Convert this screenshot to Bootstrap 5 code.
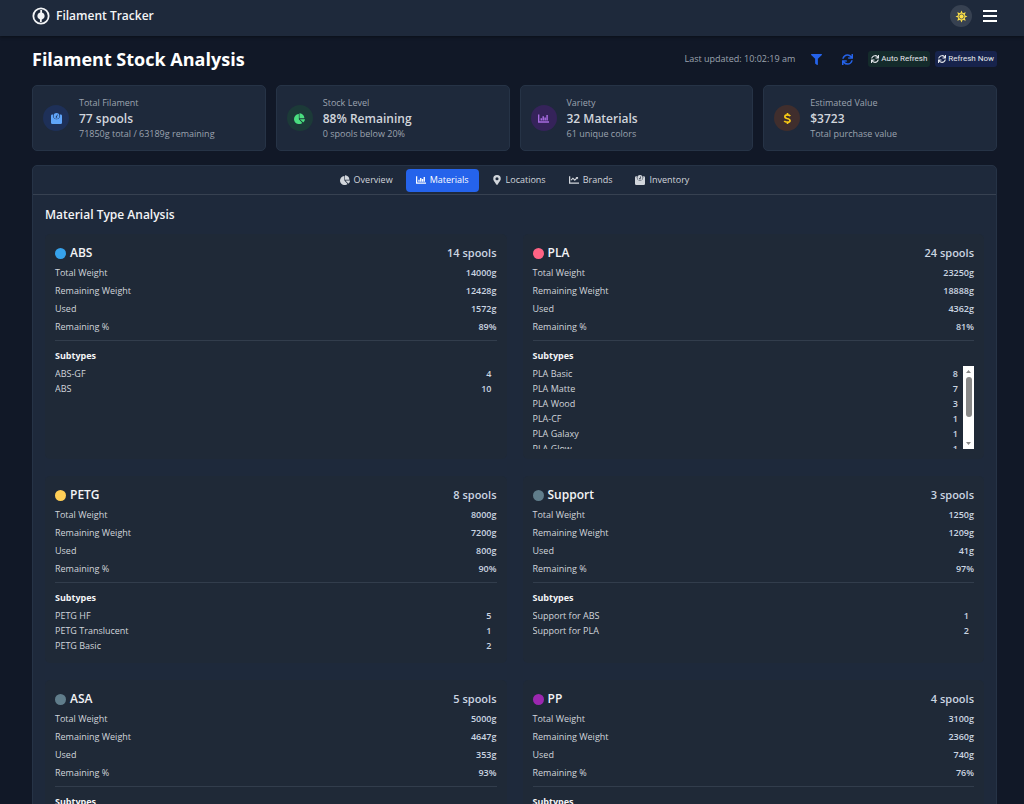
<!DOCTYPE html>
<html lang="en"><head><meta charset="utf-8"><title>Filament Tracker</title>
<meta name="viewport" content="width=device-width, initial-scale=1">
<link href="https://cdn.jsdelivr.net/npm/bootstrap@5.3.0/dist/css/bootstrap.min.css" rel="stylesheet">
<style>
html,body{height:100%;overflow:hidden}
body{background:#111827;color:#d1d5db;font:9px/14px "Open Sans","Noto Sans",sans-serif}
button{font:inherit;border:0;background:none;color:inherit}
svg{display:block;fill:currentColor;flex:none}
.gutter{padding-left:32px;padding-right:27px}
.topbar{background:#1e293b;height:36px;padding-bottom:4px;color:#fff;box-shadow:0 1px 3px #0006}
.brand-link{font-size:12px;font-weight:600;color:#f3f4f6;gap:6px}
.actions{gap:11px}
.theme-btn{width:22px;height:22px;background:#374151;color:#fde047}
.heading{height:46px;margin-bottom:3px}
h1{font-size:18px;line-height:28px;font-weight:700;color:#fff}
h2{font-size:12px;line-height:18px;font-weight:600;color:#f3f4f6;margin:11px 12px 10px}
h3{font-size:12px;line-height:18px;font-weight:600;color:#f3f4f6;gap:4px}
.muted-text{color:#9ca3af}
.toolbar-set{gap:20px}
.icon-btn{color:#2563eb}
.pills{gap:5px;margin-left:15px}
.pill{height:16px;font-family:Roboto,"Open Sans",sans-serif;font-size:8px;line-height:16px;padding:0 3px;gap:2px;color:#e5e7eb;border-radius:3px}
.pill-green{background:#142b2b}.pill-blue{background:#17234c}
.tiles{display:grid;grid-template-columns:repeat(4,1fr);gap:10px}
.tile{height:66px;background:#1e293b;border:1px solid #263346;border-radius:5px;padding:0 10px;gap:10px}
.disc{width:26px;height:26px}
.tile-value{font-size:12px;line-height:17px;font-weight:600;color:#d1d5db}
.panel{background:#1e293b;border:1px solid #263346;border-radius:5px 5px 0 0;margin-top:14px}
.tabs{height:29px;gap:3px;border-bottom:1px solid #374151}
.tab{height:23px;padding:0 10px;gap:4px;border-radius:4px;font-weight:500;color:#d1d5db}
.tab.active{background:#2563eb;color:#fff}
.materials{display:grid;grid-template-columns:1fr 1fr;gap:17px 16px;padding:0 12px}
.material{background:#1f2937;border-radius:5px;padding:10px}
.count{font-size:11px;line-height:18px;font-weight:600;color:#cbd5e1}
.dot{width:11px;height:11px}
.stats{margin:2px 0 4px}
.stats>div{line-height:18px}
.stats dt{font-weight:400}
.stats dd,.sublist span{font-weight:600;color:#cbd5e1;margin:0}
.subs{border-top:1px solid #323d4c;padding-top:8px}
h4{font-size:9px;line-height:14px;font-weight:700;color:#f3f4f6;margin-bottom:3px}
.subwrap{max-height:83px;overflow:hidden}
.sublist{line-height:15px;margin:0}
.sublist li{padding-right:5px}
.scroller{width:11px;height:83px;background:#fff;color:#888;padding:4px 0}
.thumb{width:6px;height:40px;margin-bottom:auto;margin-top:4px;border-radius:3px;background:#888}
</style></head><body>
<svg class="d-none">
<symbol id="logo" viewBox="0 0 24 24"><circle cx="12" cy="12" r="10.200" fill="none" stroke="currentColor" stroke-width="2.400"/><path d="M11 4h2.400v3.300a4.900 4.900 0 0 1 0 9.400H13V20h-2.400v-3.300a4.900 4.900 0 0 1 0-9.400H11z"/></symbol>
<symbol id="sun" viewBox="0 0 24 24"><path d="m12 1 2.400 5.200L19.800 4.200l-2 5.400L23 12l-5.200 2.400 2 5.400-5.400-2L12 23l-2.400-5.200-5.400 2 2-5.400L1 12l5.200-2.400-2-5.400 5.400 2z"/><circle cx="12" cy="12" r="4.500" fill="none" stroke="#374151" stroke-width="1.300"/></symbol>
<symbol id="filter" viewBox="0 0 512 512"><path d="M488 0H24C3 0-8 26 7 41l185 185v206c0 8 4 15 10 20l80 56c16 11 38 0 38-20V226L505 41c15-15 4-41-17-41z"/></symbol>
<symbol id="sync" viewBox="0 0 512 512"><path d="M440.650 12.570l4 82.770A247.160 247.160 0 0 0 255.830 8C134.730 8 33.910 94.920 12.290 209.820A12 12 0 0 0 24.090 224h49.050a12 12 0 0 0 11.670-9.260 175.910 175.910 0 0 1 317-56.940l-101.460-4.860a12 12 0 0 0-12.570 12v47.410a12 12 0 0 0 12 12H500a12 12 0 0 0 12-12V12a12 12 0 0 0-12-12h-47.370a12 12 0 0 0-11.980 12.570zM255.830 432a175.610 175.610 0 0 1-146-77.800l101.800 4.870a12 12 0 0 0 12.570-12v-47.400a12 12 0 0 0-12-12H12a12 12 0 0 0-12 12V500a12 12 0 0 0 12 12h47.350a12 12 0 0 0 12-12.600l-4.150-82.570A247.170 247.170 0 0 0 255.830 504c121.110 0 221.930-86.920 243.550-201.820a12 12 0 0 0-11.800-14.180h-49.050a12 12 0 0 0-11.670 9.260A175.860 175.860 0 0 1 255.830 432z"/></symbol>
<symbol id="pie" viewBox="0 0 544 512"><path d="M528 288H290l158 158c6 6 16 7 22 1 39-36 65-87 73-143 1-9-6-16-15-16zM512 223C504 101 407 8 289 0c-9-1-17 7-17 16v224h224c9 0 17-8 16-17zM240 288V50c0-9-7-16-16-15C96 53 0 162 0 292c4 135 119 242 254 240 53-1 102-18 142-46 8-6 9-18 2-25L240 288z"/></symbol>
<symbol id="bars" viewBox="0 0 512 512"><path d="M0 64h64v320h448v64H0zM118 240h70v105h-70zM208 150h70v195h-70zM298 210h70v135h-70zM388 96h70v249h-70z"/></symbol>
<symbol id="line" viewBox="0 0 512 512"><path d="M0 64h64v320h448v64H0zM330 96h134v134l-46-46-122 122-96-96-72 72-42-42 114-114 96 96 78-78z"/></symbol>
<symbol id="pin" viewBox="0 0 384 512"><path fill-rule="evenodd" d="M172 502C27 291 0 270 0 192a192 192 0 0 1 384 0c0 78-27 99-172 310a24 24 0 0 1-40 0zM192 272a80 80 0 1 0 0-160 80 80 0 0 0 0 160z"/></symbol>
<symbol id="scale" viewBox="0 0 512 512"><path fill-rule="evenodd" d="M64 64h36a168 168 0 1 0 312 0h36a64 64 0 0 1 64 64v320a64 64 0 0 1-64 64H64a64 64 0 0 1-64-64V128a64 64 0 0 1 64-64z"/><path fill-rule="evenodd" d="M256 0a136 136 0 1 0 0 272 136 136 0 0 0 0-272zm0 226a40 40 0 0 1-28-68 40 40 0 0 1 20-10l38-84 30 14-38 84a40 40 0 0 1-22 64z"/></symbol>
<symbol id="dollar" viewBox="0 0 24 24"><path fill="none" stroke="currentColor" stroke-width="3.600" d="M18 7c-1-2-3-3-6-3-7 0-8 6-1 8 9 2 8 8 1 8-3 0-6-1-7-3M12 0v4m0 16v4"/></symbol>
</svg>
<header class="topbar gutter d-flex align-items-center justify-content-between">
<a href="#" class="brand-link d-flex align-items-center text-decoration-none"><svg width="18" height="18"><use href="#logo"/></svg>Filament Tracker</a>
<div class="actions d-flex align-items-center"><button class="theme-btn rounded-circle d-flex align-items-center justify-content-center p-0" aria-label="Toggle theme"><svg width="13" height="13"><use href="#sun"/></svg></button>
<button class="p-0" aria-label="Menu"><svg width="14" height="14" viewBox="0 0 14 14"><path d="M0 1h14v2H0zM0 6h14v2H0zM0 11h14v2H0z"/></svg></button></div>
</header>
<main class="gutter">
<div class="heading d-flex align-items-center justify-content-between"><h1 class="m-0">Filament Stock Analysis</h1>
<div class="d-flex align-items-center"><span class="muted-text me-3">Last updated: 10:02:19 am</span>
<div class="toolbar-set d-flex"><button class="icon-btn p-0" aria-label="Filter"><svg width="11" height="11"><use href="#filter"/></svg></button><button class="icon-btn p-0" aria-label="Sync"><svg width="11" height="11"><use href="#sync"/></svg></button></div>
<div class="pills d-flex"><button class="pill pill-green d-flex align-items-center"><svg width="8" height="8"><use href="#sync"/></svg>Auto Refresh</button><button class="pill pill-blue d-flex align-items-center"><svg width="8" height="8"><use href="#sync"/></svg>Refresh Now</button></div></div></div>
<section class="tiles" id="tiles"></section>
<section class="panel"><nav class="tabs d-flex justify-content-center align-items-center" id="tabs"></nav>
<h2>Material Type Analysis</h2><div class="materials" id="materials"></div></section>
</main>
<script>
const tiles = [
  ['scale','#60a5fa','#1e3058','Total Filament','77 spools','71850g total / 63189g remaining'],
  ['pie','#4ade80','#1c3a38','Stock Level','88% Remaining','0 spools below 20%'],
  ['bars','#a66be0','#35235a','Variety','32 Materials','61 unique colors'],
  ['dollar','#facc15','#402e2d','Estimated Value','$3723','Total purchase value']
];
const tabs = [['pie','Overview'],['bars','Materials'],['pin','Locations'],['line','Brands'],['scale','Inventory']];
const labels = ['Total Weight','Remaining Weight','Used','Remaining %'];
const materials = [
  ['ABS','#36a2eb',14,['14000g','12428g','1572g','89%'],[['ABS-GF',4],['ABS',10]]],
  ['PLA','#ff6384',24,['23250g','18888g','4362g','81%'],[['PLA Basic',8],['PLA Matte',7],['PLA Wood',3],['PLA-CF',1],['PLA Galaxy',1],['PLA Glow',1]]],
  ['PETG','#ffce56',8,['8000g','7200g','800g','90%'],[['PETG HF',5],['PETG Translucent',1],['PETG Basic',2]]],
  ['Support','#607d8b',3,['1250g','1209g','41g','97%'],[['Support for ABS',1],['Support for PLA',2]]],
  ['ASA','#607d8b',5,['5000g','4647g','353g','93%'],[]],
  ['PP','#9c27b0',4,['3100g','2360g','740g','76%'],[]]
];
// Lists longer than five subtypes get a scroll track beside them.
const scroller = `<div class="scroller d-flex flex-column align-items-center"><svg width="5" height="3" viewBox="0 0 5 3"><path d="M0 3h5L2.500 0z"/></svg><div class="thumb"></div><svg width="5" height="3" viewBox="0 0 5 3"><path d="M0 0h5L2.500 3z"/></svg></div>`;
document.getElementById('tiles').innerHTML = tiles.map(t => `<div class="tile d-flex align-items-center"><span class="disc rounded-circle d-flex align-items-center justify-content-center" style="color:${t[1]};background:${t[2]}"><svg width="11" height="11"><use href="#${t[0]}"/></svg></span><div><div class="muted-text">${t[3]}</div><div class="tile-value">${t[4]}</div><div class="muted-text">${t[5]}</div></div></div>`).join('');
document.getElementById('tabs').innerHTML = tabs.map((t,i) => `<button class="tab d-flex align-items-center ${i==1?'active':''}"><svg width="10" height="10"><use href="#${t[0]}"/></svg>${t[1]}</button>`).join('');
document.getElementById('materials').innerHTML = materials.map(m => `<article class="material"><div class="d-flex justify-content-between"><h3 class="m-0 d-flex align-items-center"><span class="dot rounded-circle" style="background:${m[1]}"></span>${m[0]}</h3><span class="count">${m[2]} spools</span></div><dl class="stats">${labels.map((l,i) => `<div class="d-flex justify-content-between"><dt>${l}</dt><dd>${m[3][i]}</dd></div>`).join('')}</dl><div class="subs"><h4>Subtypes</h4><div class="subwrap d-flex"><ul class="sublist list-unstyled flex-grow-1">${m[4].map(s => `<li class="d-flex justify-content-between">${s[0]}<span>${s[1]}</span></li>`).join('')}</ul>${m[4].length > 5 ? scroller : ''}</div></div></article>`).join('');
</script>
<script src="https://cdn.jsdelivr.net/npm/bootstrap@5.3.0/dist/js/bootstrap.bundle.min.js"></script>
</body></html>
